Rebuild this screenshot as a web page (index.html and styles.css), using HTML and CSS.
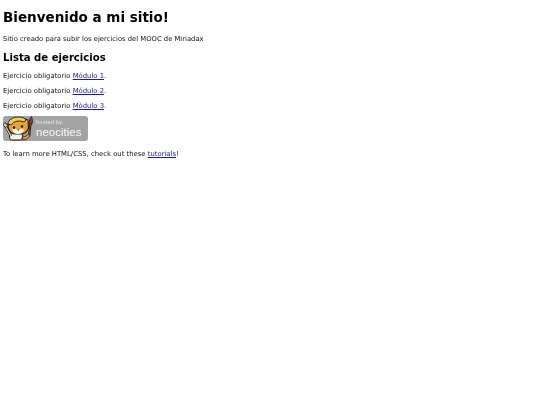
FILE: index.html
```html
<!DOCTYPE html>
<html lang="es">
<head>
<meta charset="utf-8">
<title>Bienvenido a mi sitio!</title>
<link rel="stylesheet" href="styles.css">
</head>
<body>
<h1>Bienvenido a mi sitio!</h1>
<p class="intro">Sitio creado para subir los ejercicios del MOOC de Miriadax</p>
<h2>Lista de ejercicios</h2>
<p>Ejercicio obligatorio <a href="#">Módulo 1</a>.</p>
<p>Ejercicio obligatorio <a href="#">Módulo 2</a>.</p>
<p>Ejercicio obligatorio <a href="#">Módulo 3</a>.</p>
<a class="badge" href="#">
<svg class="mascot" viewBox="0 0 30 25" aria-hidden="true">
<path d="M8 17c-2 2-2 6 0 7h10c2-2 2-5 1-7z" fill="#f4f1e6" stroke="#1c1c1c"/>
<path d="M2 9l6 11" stroke="#1c1c1c" stroke-width="2.600"/>
<path d="M2 9l6 11" stroke="#e6e6e6" stroke-width="1.200"/>
<path d="M.5 9.500c0-2 1-3 2-3l.5 2 1.500-.5c.5 1.500-.5 3-2 3z" fill="#e6e6e6" stroke="#1c1c1c" stroke-width=".8"/>
<path d="M5 11c0-2 1-4 3-5l14-3 3 1 .5 8c-1 3-3 5-6 6H11c-3-1-5-3-6-7z" fill="#e9a23c" stroke="#1c1c1c" stroke-width="1.100"/>
<path d="M5 8c0-4 5-7 10-7 4 0 7 1 8 3l-2 2c-5-2-10-1-13 3z" fill="#f5cf4e" stroke="#1c1c1c" stroke-width=".9"/>
<path d="M9 14c2-2 4-1 6 0 2-1 4-2 6 0-1 2-3 4-6 4s-5-2-6-4z" fill="#fbf7ea"/>
<circle cx="11" cy="11.500" r="1.200" fill="#1c1c1c"/>
<circle cx="19" cy="10.500" r="1.200" fill="#1c1c1c"/>
<path d="M14 13.500h2.500l-1.200 1.200z" fill="#1c1c1c"/>
<path d="M26 20l1.500-12" stroke="#1c1c1c" stroke-width="2.200"/>
<path d="M26 20l1.500-12" stroke="#7c4a33" stroke-width="1"/>
<path d="M26.500 8c-1-3 .5-5.500 2-7.500 1 2.500 1.500 5 .5 7.500z" fill="#9c2f3a" stroke="#1c1c1c" stroke-width=".7"/>
<path d="M19 21c3 0 5-1 6.500-3l1.500 1c-1 3-4 5-7 5z" fill="#e9a23c" stroke="#1c1c1c" stroke-width=".8"/>
</svg>
<span class="badge-text"><span class="hosted">hosted by,</span><span class="neo">neocities</span></span>
</a>
<p class="learn">To learn more HTML/CSS, check out these <a href="#">tutorials</a>!</p>
</body>
</html>
```
FILE: styles.css
```css
html {
  background: #fff;
}
body {
  margin: 0;
  padding: 8px 3px 0;
  font-family: "DejaVu Sans", sans-serif;
  font-size: 6.85px;
  line-height: 9px;
  color: #111;
  filter: blur(0.3px);
}
h1 {
  margin: 0 0 9px;
  font-size: 13.5px;
  line-height: 18px;
  color: #000;
}
h2 {
  margin: 7px 0 7px;
  font-size: 10.125px;
  line-height: 14px;
  color: #000;
}
p {
  margin: 0 0 6px;
}
.intro {
  font-size: 6.8px;
}
a {
  color: #1a1aa8;
}
.badge {
  display: flex;
  align-items: center;
  width: 85px;
  height: 25px;
  margin-top: -1px;
  background: #a3a3a3;
  border-radius: 3px;
  text-decoration: none;
}
.mascot {
  width: 30px;
  height: 25px;
  flex: none;
}
.badge-text {
  display: flex;
  flex-direction: column;
  padding: 1px 0 0 3px;
}
.hosted {
  font-family: "Liberation Sans", sans-serif;
  font-size: 5.5px;
  font-weight: 700;
  line-height: 6.5px;
  color: #dcdcdc;
}
.neo {
  font-family: "Liberation Sans", sans-serif;
  font-size: 11.5px;
  line-height: 13.5px;
  color: #fafafa;
}
.learn {
  margin-top: 9px;
}
```
